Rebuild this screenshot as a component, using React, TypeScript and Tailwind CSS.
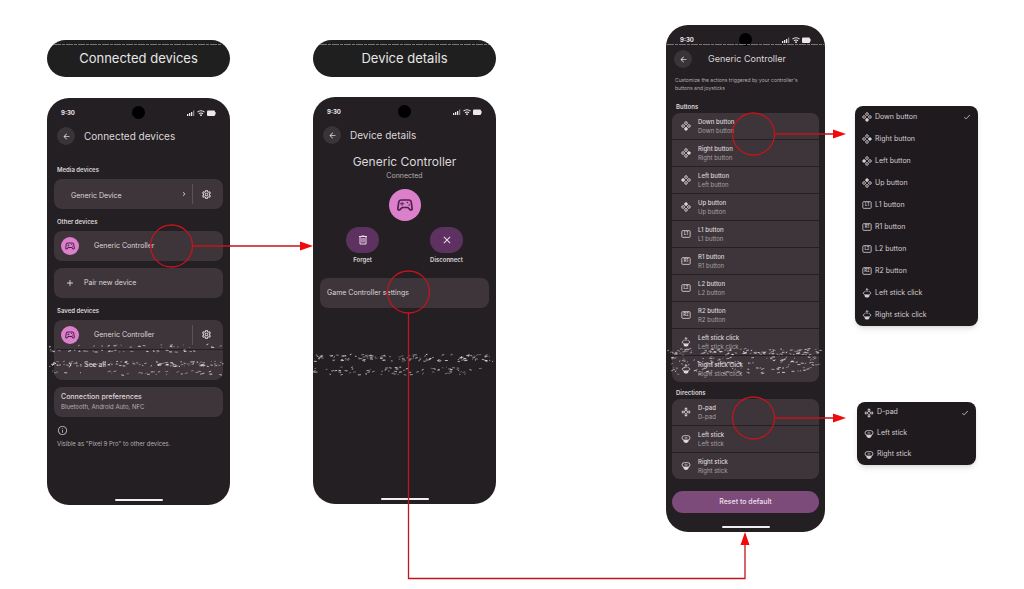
import type { ReactNode } from "react";
import {
  MdAdd,
  MdArrowBack,
  MdCheck,
  MdChevronRight,
  MdClose,
  MdInfoOutline,
  MdOutlineGamepad,
  MdOutlineSettings,
  MdOutlineSportsEsports,
} from "react-icons/md";

type IconName =
  | "down"
  | "right"
  | "left"
  | "up"
  | "L1"
  | "R1"
  | "L2"
  | "R2"
  | "click"
  | "stick"
  | "dpad";

type Item = { label: string; icon: IconName };

const buttons: Item[] = [
  { label: "Down button", icon: "down" },
  { label: "Right button", icon: "right" },
  { label: "Left button", icon: "left" },
  { label: "Up button", icon: "up" },
  { label: "L1 button", icon: "L1" },
  { label: "R1 button", icon: "R1" },
  { label: "L2 button", icon: "L2" },
  { label: "R2 button", icon: "R2" },
  { label: "Left stick click", icon: "click" },
  { label: "Right stick click", icon: "click" },
];

const directions: Item[] = [
  { label: "D-pad", icon: "dpad" },
  { label: "Left stick", icon: "stick" },
  { label: "Right stick", icon: "stick" },
];

const facePositions = [
  { name: "up", x: 12, y: 5 },
  { name: "down", x: 12, y: 19 },
  { name: "left", x: 5, y: 12 },
  { name: "right", x: 19, y: 12 },
];

const ControlIcon = ({ name }: { name: IconName }) => {
  if (name === "dpad") {
    return <MdOutlineGamepad className="size-[10px] shrink-0" />;
  }
  if (name === "click" || name === "stick") {
    return (
      <svg viewBox="0 0 24 24" className="size-[10px] shrink-0" fill="none" stroke="currentColor" strokeWidth="2">
        {name === "click" ? (
          <>
            <path d="M12 1.500v8M8.500 5L12 1.500L15.500 5" />
            <path d="M8 8.500C5 9 3 10.500 3 12.500c0 2.500 4 4 9 4s9-1.500 9-4c0-2-2-3.500-5-4" />
            <path d="M6 16.500h12c0 4-2.500 6.500-6 6.500s-6-2.500-6-6.500z" fill="currentColor" stroke="none" />
          </>
        ) : (
          <>
            <rect x="2.500" y="4" width="19" height="10.500" rx="5.250" />
            <path d="M8.500 9.500h7" />
            <path d="M5.500 14.500h13c0 4-2.500 7-6.500 7s-6.500-3-6.500-7z" fill="currentColor" stroke="none" />
          </>
        )}
      </svg>
    );
  }
  if (name === "up" || name === "down" || name === "left" || name === "right") {
    return (
      <svg viewBox="0 0 24 24" className="size-[10px] shrink-0" fill="none" stroke="currentColor" strokeWidth="2.200">
        {facePositions.map((p) => (
          <circle key={p.name} cx={p.x} cy={p.y} r="3.200" fill={p.name === name ? "currentColor" : "none"} />
        ))}
      </svg>
    );
  }
  return (
    <svg viewBox="0 0 24 24" className="size-[10px] shrink-0" fill="none" stroke="currentColor" strokeWidth="2">
      <rect x="2" y="4" width="20" height="16" rx="2" />
      <text x="12" y="15.500" textAnchor="middle" fontSize="10" fontWeight="600" fill="currentColor" stroke="none">
        {name}
      </text>
    </svg>
  );
};

const TrashIcon = () => (
  <svg viewBox="0 0 24 24" className="size-3" fill="currentColor">
    <path d="M7 21q-.825 0-1.412-.587T5 19V6H4V4h5V3h6v1h5v2h-1v13q0 .825-.587 1.413T17 21zM17 6H7v13h10zM9 17h2V8H9zm4 0h2V8h-2z" />
  </svg>
);

const StatusBar = () => (
  <div className="grid grid-cols-3 items-center px-[14px] py-2 text-[6px] leading-[13px] font-bold text-[#eee6ea]">
    <span>9:30</span>
    <span className="size-[13px] justify-self-center rounded-full bg-black" />
    <svg viewBox="0 0 30 8" className="h-2 w-[30px] justify-self-end" fill="#eee6ea">
      <rect x="1" y="5" width="1.300" height="2" />
      <rect x="3" y="4" width="1.300" height="3" />
      <rect x="5" y="3" width="1.300" height="4" />
      <rect x="7" y="1.500" width="1.300" height="5.500" opacity="0.500" />
      <path d="M11.500 3.200a5 5 0 0 1 7 0M13 4.900a2.800 2.800 0 0 1 4 0" fill="none" stroke="#eee6ea" strokeWidth="1.100" />
      <circle cx="15" cy="6.200" r="0.900" />
      <rect x="21" y="1.500" width="8" height="5.500" rx="1" />
      <rect x="29" y="3" width="1" height="2.500" opacity="0.600" />
    </svg>
  </div>
);

const Phone = ({ children }: { children: ReactNode }) => (
  <section className="rounded-[22px] bg-[#231f22] pb-1 text-[#ded6da]">
    <StatusBar />
    {children}
  </section>
);

const HomeBar = () => <div className="mx-auto h-[2px] w-12 rounded-full bg-[#f1edf0]" />;

const BackButton = () => (
  <button type="button" aria-label="Back" className="flex size-[18px] shrink-0 items-center justify-center rounded-full bg-[#383437]">
    <MdArrowBack className="size-[9px]" />
  </button>
);

const Avatar = () => (
  <span className="flex size-[18px] shrink-0 items-center justify-center rounded-full bg-[#dc80cc] text-[#4c2148]">
    <MdOutlineSportsEsports className="size-3" />
  </span>
);

const SettingsButton = () => (
  <button type="button" aria-label="Device settings" className="flex h-5 w-[31px] items-center justify-center border-l border-[#5a5256] pr-1">
    <MdOutlineSettings className="size-[11px]" />
  </button>
);

const GroupLabel = ({ children }: { children: ReactNode }) => (
  <h3 className="mx-[10px] text-[6px] leading-[10px] font-semibold">{children}</h3>
);

const PageTitle = ({ children }: { children: ReactNode }) => (
  <h1 className="rounded-full bg-[#1f1f1f] text-center text-[13px] leading-[37px] text-[#e6e6e6]">{children}</h1>
);

const ConnectedDevices = () => (
  <Phone>
    <header className="mb-5 flex items-center gap-[9px] px-[10px]">
      <BackButton />
      <h2 className="text-[10px] leading-[18px]">Connected devices</h2>
    </header>

    <GroupLabel>Media devices</GroupLabel>
    <div className="mx-[7px] mt-1 mb-2 flex h-[30px] items-center rounded-lg bg-[#3d3539]">
      <button type="button" className="flex grow items-center justify-between pr-1 pl-[17px] text-[7px] leading-[10px]">
        <span className="pt-1">Generic Device</span>
        <MdChevronRight className="size-2" />
      </button>
      <SettingsButton />
    </div>

    <GroupLabel>Other devices</GroupLabel>
    <div className="mx-[7px] mt-1 mb-2 flex flex-col gap-[7px] text-[7px] leading-[10px]">
      <button type="button" className="flex h-[30px] items-center gap-[15px] rounded-lg bg-[#3d3539] pl-[7px]">
        <Avatar />
        Generic Controller
      </button>
      <button type="button" className="flex h-[30px] items-center gap-[9px] rounded-lg bg-[#3d3539] pl-[11px]">
        <MdAdd className="size-[10px]" />
        Pair new device
      </button>
    </div>

    <GroupLabel>Saved devices</GroupLabel>
    <div className="mx-[7px] mt-1 flex flex-col gap-px overflow-hidden rounded-lg text-[7px] leading-[10px]">
      <div className="flex h-[29px] items-center bg-[#3d3539]">
        <button type="button" className="flex grow items-center gap-[15px] pl-[7px]">
          <Avatar />
          Generic Controller
        </button>
        <SettingsButton />
      </div>
      <button type="button" className="flex h-[30px] items-center gap-[9px] bg-[#3d3539] pl-[11px]">
        <MdChevronRight className="size-[10px]" />
        See all
      </button>
    </div>

    <button type="button" className="mx-[7px] mt-[7px] flex h-[30px] w-[calc(100%-14px)] flex-col justify-center rounded-lg bg-[#3d3539] pl-[7px] text-left">
      <span className="text-[7px] leading-[10px] font-medium">Connection preferences</span>
      <span className="text-[6px] leading-[10px] text-[#b5adb1]">Bluetooth, Android Auto, NFC</span>
    </button>

    <div className="mx-[10px] mt-2 mb-[50px] text-[#b5adb1]">
      <MdInfoOutline className="size-[11px]" />
      <p className="mt-[3px] text-[6px] leading-[10px] whitespace-nowrap">Visible as "Pixel 9 Pro" to other devices.</p>
    </div>
    <HomeBar />
  </Phone>
);

const DeviceAction = ({ label, children }: { label: string; children: ReactNode }) => (
  <button type="button" className="flex w-[84px] flex-col items-center gap-[2px] text-[6px] leading-[10px] font-semibold">
    <span className="flex h-[26px] w-[33px] items-center justify-center rounded-full bg-[#5d3260] text-[#f0d6ee]">
      {children}
    </span>
    {label}
  </button>
);

const DeviceDetails = () => (
  <Phone>
    <header className="mb-[9px] flex items-center gap-[9px] px-[10px]">
      <BackButton />
      <h2 className="text-[10px] leading-[18px]">Device details</h2>
    </header>
    <div className="flex flex-col items-center">
      <h3 className="text-xs leading-[18px]">Generic Controller</h3>
      <p className="text-[7px] leading-[10px] text-[#b5adb1]">Connected</p>
      <span className="mt-2 flex size-8 items-center justify-center rounded-full bg-[#dc80cc] text-[#4c2148]">
        <MdOutlineSportsEsports className="size-5" />
      </span>
    </div>
    <div className="mt-[6px] mb-3 flex justify-center">
      <DeviceAction label="Forget">
        <TrashIcon />
      </DeviceAction>
      <DeviceAction label="Disconnect">
        <MdClose className="size-3" />
      </DeviceAction>
    </div>
    <button type="button" className="mx-[7px] mt-[13px] mb-[190px] flex h-[30px] w-[calc(100%-14px)] items-center rounded-lg bg-[#3d3539] pl-[7px] text-[7px] leading-[10px]">
      Game Controller settings
    </button>
    <HomeBar />
  </Phone>
);

const MappingList = ({ items }: { items: Item[] }) => (
  <div className="mx-[6px] mt-px flex flex-col gap-px overflow-hidden rounded-lg">
    {items.map((item) => (
      <button key={item.label} type="button" className="flex h-[26px] items-center gap-[7px] bg-[#3d3539] pl-[9px] text-left">
        <ControlIcon name={item.icon} />
        <span className="flex flex-col">
          <span className="text-[6px] leading-[9px] font-medium">{item.label}</span>
          <span className="text-[6px] leading-[9px] text-[#a8a0a4]">{item.label}</span>
        </span>
      </button>
    ))}
  </div>
);

const ControllerSettings = () => (
  <Phone>
    <header className="-mt-1 flex items-center gap-4 px-2">
      <BackButton />
      <h2 className="text-[9px] leading-[18px]">Generic Controller</h2>
    </header>
    <p className="mx-[9px] mt-2 mb-[10px] text-[5px] leading-2 text-[#b5adb1]">
      Customize the actions triggered by your controller's buttons and joysticks
    </p>
    <GroupLabel>Buttons</GroupLabel>
    <MappingList items={buttons} />
    <div className="mt-[6px]">
      <GroupLabel>Directions</GroupLabel>
    </div>
    <MappingList items={directions} />
    <button type="button" className="mx-[6px] mt-3 mb-[13px] w-[calc(100%-12px)] rounded-full bg-[#7c4b79] text-center text-[7px] leading-[22px] font-medium text-[#f1dff0]">
      Reset to default
    </button>
    <HomeBar />
  </Phone>
);

const OptionMenu = ({ items, rowClass }: { items: Item[]; rowClass: string }) => (
  <ul className="overflow-hidden rounded-lg bg-[#1f1a1e] text-[#d5cdd1] shadow-md">
    {items.map((item, index) => (
      <li key={item.label}>
        <button type="button" className={`flex w-full items-center gap-[3px] px-[7px] text-[7px] ${rowClass}`}>
          <ControlIcon name={item.icon} />
          {item.label}
          {index === 0 && <MdCheck className="ml-auto size-2" />}
        </button>
      </li>
    ))}
  </ul>
);

// Fixed-seed noise, so the specks land in the same place on every render.
const makeSpecks = () => {
  const bands = [
    { x: 49, width: 180, y: 346, spread: 3, count: 26 },
    { x: 49, width: 150, y: 351, spread: 2, count: 34 },
    { x: 47, width: 182, y: 364, spread: 5, count: 110 },
    { x: 47, width: 182, y: 373, spread: 4, count: 34 },
    { x: 313, width: 183, y: 358, spread: 7, count: 130 },
    { x: 313, width: 183, y: 371, spread: 8, count: 70 },
    { x: 667, width: 157, y: 352, spread: 6, count: 120 },
    { x: 667, width: 157, y: 361, spread: 8, count: 80 },
    { x: 667, width: 157, y: 371, spread: 7, count: 50 },
  ];
  let seed = 7;
  const next = () => {
    seed = (seed * 16807) % 2147483647;
    return seed / 2147483647;
  };
  return bands.flatMap((band) =>
    Array.from({ length: band.count }, () => ({
      x: band.x + next() * (band.width - 4),
      y: band.y + (next() - 0.5) * band.spread,
      length: 0.8 + next() * 2.4,
      slope: (next() - 0.6) * 1.5,
      opacity: 0.4 + next() * 0.6,
    })),
  );
};

const specks = makeSpecks();

const Connectors = () => (
  <svg viewBox="0 0 1024 589" preserveAspectRatio="none" className="pointer-events-none absolute inset-0 size-full" fill="none">
    <g stroke="#f4eef2" strokeWidth="0.800">
      {specks.map((s, i) => (
        <path key={i} d={`M${s.x} ${s.y}l${s.length} ${s.slope}`} opacity={s.opacity} />
      ))}
    </g>
    <path d="M54 44.500h168M320 44.500h169M667 44.500h157" stroke="#8c8c8c" strokeDasharray="7 1 3 1" opacity="0.800" />
    <g stroke="#c4141d" strokeWidth="1.300">
      <circle cx="171.500" cy="246" r="21" />
      <circle cx="408.500" cy="292" r="21" />
      <circle cx="753.500" cy="134" r="21" />
      <circle cx="753.500" cy="418" r="21" />
      <path d="M192.500 246H301M408.500 313V578.500H745V545M774.500 134H834M774.500 418H834" />
    </g>
    <path d="M313 246l-13-4.500v9zM745 532l-4.500 13h9zM846 134l-13-4.500v9zM846 418l-13-4.500v9z" fill="#f00a0a" />
  </svg>
);

export default function App() {
  return (
    <main className="relative grid grid-cols-[47fr_183fr_83fr_183fr_170fr_159fr_30fr_123fr_46fr] items-start bg-white pb-[57px] font-[Inter,sans-serif]">
      <div className="col-start-2 flex flex-col gap-[21px] pt-10">
        <PageTitle>Connected devices</PageTitle>
        <ConnectedDevices />
      </div>
      <div className="col-start-4 flex flex-col gap-5 pt-10">
        <PageTitle>Device details</PageTitle>
        <DeviceDetails />
      </div>
      <div className="col-start-6 pt-[25px]">
        <ControllerSettings />
      </div>
      <div className="col-start-8 flex flex-col gap-[76px] pt-[106px]">
        <OptionMenu items={buttons} rowClass="h-[22px]" />
        <div className="mx-[2px]">
          <OptionMenu items={directions} rowClass="h-[21px]" />
        </div>
      </div>
      <Connectors />
    </main>
  );
}
